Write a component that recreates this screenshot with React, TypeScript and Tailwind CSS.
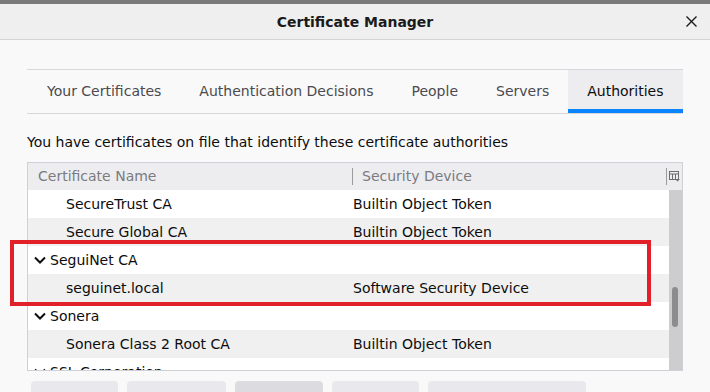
import React from "react";

type Row = {
  name: string;
  device?: string;
  level: 0 | 1;
};

const rows: Row[] = [
  { name: "SecureTrust CA", device: "Builtin Object Token", level: 1 },
  { name: "Secure Global CA", device: "Builtin Object Token", level: 1 },
  { name: "SeguiNet CA", level: 0 },
  { name: "seguinet.local", device: "Software Security Device", level: 1 },
  { name: "Sonera", level: 0 },
  { name: "Sonera Class 2 Root CA", device: "Builtin Object Token", level: 1 },
  { name: "SSL Corporation", level: 0 },
];

const tabs = ["Your Certificates", "Authentication Decisions", "People", "Servers", "Authorities"];

function Chevron() {
  return (
    <svg width="12" height="8" viewBox="0 0 12 8" className="shrink-0">
      <path d="M1 1.5 L6 6.5 L11 1.5" fill="none" stroke="#0c0c0d" strokeWidth="2" />
    </svg>
  );
}

function ColumnPicker() {
  return (
    <svg width="11" height="11" viewBox="0 0 11 11">
      <rect x="0.5" y="0.5" width="9" height="8" fill="none" stroke="#6d6d6d" />
      <path d="M0.5 3 H9.5 M3.5 3 V8.5 M6.5 3 V8.5" stroke="#6d6d6d" />
      <path d="M6 8 H11 L8.5 10.5 Z" fill="#6d6d6d" />
    </svg>
  );
}

export default function App() {
  return (
    <div className="relative h-[392px] w-[710px] overflow-hidden bg-[#f9f9fa] font-['DejaVu_Sans',sans-serif] text-[14px] text-[#0c0c0d]">
      <div className="h-[4px] bg-[#7a7a7a]" />

      {/* title bar */}
      <div className="relative flex h-[36px] items-center justify-center border-b border-[#d4d4d4] bg-[#efefef] pt-[1px]">
        <span className="font-bold text-[#1a1a1a]">Certificate Manager</span>
        <svg className="absolute right-[13px] top-[12px]" width="11" height="11" viewBox="0 0 11 11">
          <path d="M0.5 0.5 L10.5 10.5 M10.5 0.5 L0.5 10.5" stroke="#1a1a1a" strokeWidth="1.4" />
        </svg>
      </div>

      <div className="px-[27px] pt-[29px]">
        {/* tabs */}
        <div className="flex h-[45px] overflow-hidden whitespace-nowrap border-y border-[#d7d7db]">
          {tabs.map((t) => {
            const active = t === "Authorities";
            return (
              <div
                key={t}
                className={`relative flex shrink-0 items-center ${
                  active ? "bg-[#ededf0] px-[19px] text-[#0c0c0d]" : "px-[19px] text-[#4a4a4f]"
                } ${t === "Your Certificates" ? "pl-[20px]" : ""}`}
              >
                {t}
                {active && <div className="absolute inset-x-0 bottom-0 h-[4px] bg-[#0a84ff]" />}
              </div>
            );
          })}
        </div>

        <p className="mt-[18px] leading-[20px]">You have certificates on file that identify these certificate authorities</p>

        {/* tree */}
        <div className="mt-[10px] h-[209px] overflow-hidden border border-[#cfcfd8] bg-white">
          <div className="flex h-[27px] items-center bg-[#ededf0] text-[#7b7b80]">
            <div className="flex w-[324px] items-center pl-[10px]">Certificate Name</div>
            <div className="h-[17px] w-px bg-[#9a9a9a]" />
            <div className="flex-1 pl-[9px]">Security Device</div>
            <div className="h-[17px] w-px bg-[#9a9a9a]" />
            <div className="flex w-[15px] items-center justify-center">
              <ColumnPicker />
            </div>
          </div>
          <div className="flex">
            <div className="flex-1">
              {rows.map((r, i) => (
                <div
                  key={r.name}
                  className={`flex h-[28px] items-center ${i % 2 === 1 ? "bg-[#f0f0f0]" : "bg-white"}`}
                >
                  <div className="flex w-[325px] items-center">
                    {r.level === 0 ? (
                      <div className="flex items-center gap-[4px] pl-[6px]">
                        <Chevron />
                        <span>{r.name}</span>
                      </div>
                    ) : (
                      <span className="pl-[38px]">{r.name}</span>
                    )}
                  </div>
                  <div className="flex-1">{r.device}</div>
                </div>
              ))}
            </div>
            <div className="relative h-[181px] w-[13px] bg-[#cdcdcd]">
              <div className="absolute left-[3px] top-[97px] h-[40px] w-[6px] rounded-full bg-[#8c8c8c]" />
            </div>
          </div>
        </div>

        {/* bottom buttons */}
        <div className="mt-[10px] flex gap-[9px] pl-[4px]">
          <div className="h-[20px] w-[87px] rounded-[4px] bg-[#e9e9ed]" />
          <div className="h-[20px] w-[99px] rounded-[4px] bg-[#e9e9ed]" />
          <div className="h-[20px] w-[88px] rounded-[4px] bg-[#dcdce0]" />
          <div className="h-[20px] w-[87px] rounded-[4px] bg-[#e9e9ed]" />
          <div className="h-[20px] w-[158px] rounded-[4px] bg-[#e9e9ed]" />
        </div>
      </div>

      {/* red highlight annotation */}
      <div className="pointer-events-none absolute left-[10px] top-[240px] h-[66px] w-[641px] border-[4px] border-[#e2202a]" />
    </div>
  );
}
